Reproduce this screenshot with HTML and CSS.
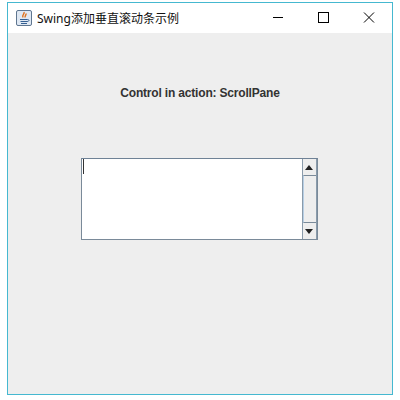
FILE: index.html
```html
<!DOCTYPE html>
<html lang="zh">

<head>
	<meta charset="UTF-8">
	<title>Swing添加垂直滚动条示例</title>
	<link rel="stylesheet" href="styles.css">
</head>

<body>
	<div class="window">
		<div class="title_bar">
			<svg class="app_icon" width="16" height="16" viewBox="0 0 16 16">
				<rect x="0.5" y="0.5" width="15" height="15" rx="1.5" fill="#dfe8f3" stroke="#5f7690"/>
				<path d="M8 2c1 2-2.500 3-1 5.500M10 3.500c.5 1.500-1.500 2.500-.8 4" fill="none" stroke="#e0701a" stroke-width="1.400"/>
				<path d="M4 9.500h7.500M4.500 11.500h6.500M5 13.500h6" fill="none" stroke="#345f92" stroke-width="1.200"/>
				<path d="M11.500 9.500c2 0 2 2-.5 2" fill="none" stroke="#345f92"/>
			</svg>
			<span class="title_text">Swing添加垂直滚动条示例</span>
			<div class="window_buttons">
				<svg class="window_button" width="46" height="30" viewBox="0 0 46 30">
					<path d="M19 14.500h10" stroke="#000" fill="none"/>
				</svg>
				<svg class="window_button" width="46" height="30" viewBox="0 0 46 30">
					<rect x="18.500" y="9.500" width="10" height="10" stroke="#000" fill="none"/>
				</svg>
				<svg class="window_button" width="46" height="30" viewBox="0 0 46 30">
					<path d="M18 9.500l10 10M28 9.500l-10 10" stroke="#000" fill="none"/>
				</svg>
			</div>
		</div>
		<div class="content">
			<div class="control_label">Control in action: ScrollPane</div>
			<div class="scroll_pane">
				<div class="text_area"><div class="caret"></div></div>
				<div class="scroll_bar">
					<div class="scroll_button">
						<div class="arrow_up"></div>
					</div>
					<div class="scroll_track"></div>
					<div class="scroll_button">
						<div class="arrow_down"></div>
					</div>
				</div>
			</div>
		</div>
	</div>
</body>

</html>
```

FILE: styles.css
```css
* {
	box-sizing: border-box;
}

body {
	margin: 0;
	background-color: white;
	font-family: "Liberation Sans", "Noto Sans CJK SC", sans-serif;
}

.window {
	width: 386px;
	height: 393px;
	margin: 2px 0 0 7px;
	border: 1px solid #45b8d0;
	background-color: #eeeeee;
}

.title_bar {
	display: flex;
	align-items: center;
	height: 30px;
	padding-left: 8px;
	background-color: white;
}

.app_icon {
	flex: none;
}

.title_text {
	margin-left: 5px;
	font-size: 12px;
	font-family: "Noto Sans", "Noto Sans CJK SC", sans-serif;
	color: #111111;
}

.window_buttons {
	display: flex;
	margin-left: auto;
}

.window_button {
	display: block;
}

.content {
	display: flex;
	flex-direction: column;
	align-items: center;
	padding-top: 53px;
}

.control_label {
	height: 15px;
	line-height: 15px;
	font-size: 12px;
	font-weight: bold;
	letter-spacing: -0.180px;
	color: #333333;
}

.scroll_pane {
	display: flex;
	width: 237px;
	height: 82px;
	margin-top: 57px;
	margin-right: 2px;
	border: 1px solid #7a8a99;
	border-top-color: #6f8296;
	background-color: white;
}

.text_area {
	flex: 1;
	padding-left: 1px;
}

.caret {
	width: 1px;
	height: 15px;
	background-color: #333333;
}

.scroll_bar {
	display: flex;
	flex-direction: column;
	width: 15px;
	border-left: 1px solid #8a9bab;
	border-right: 1px solid #8a9bab;
	background-color: #eeeeee;
}

.scroll_button {
	display: flex;
	align-items: center;
	justify-content: center;
	flex: none;
	height: 16px;
	background-color: #eeeeee;
}

.scroll_track {
	flex: 1;
	border-top: 1px solid #7a8a99;
	border-bottom: 1px solid #7a8a99;
	border-left: 1px solid #b8cfe5;
	background-color: #eeeeee;
}

.arrow_up {
	border-left: 4.500px solid transparent;
	border-right: 4.500px solid transparent;
	border-bottom: 5px solid #222222;
}

.arrow_down {
	border-left: 4.500px solid transparent;
	border-right: 4.500px solid transparent;
	border-top: 5px solid #222222;
}
```
